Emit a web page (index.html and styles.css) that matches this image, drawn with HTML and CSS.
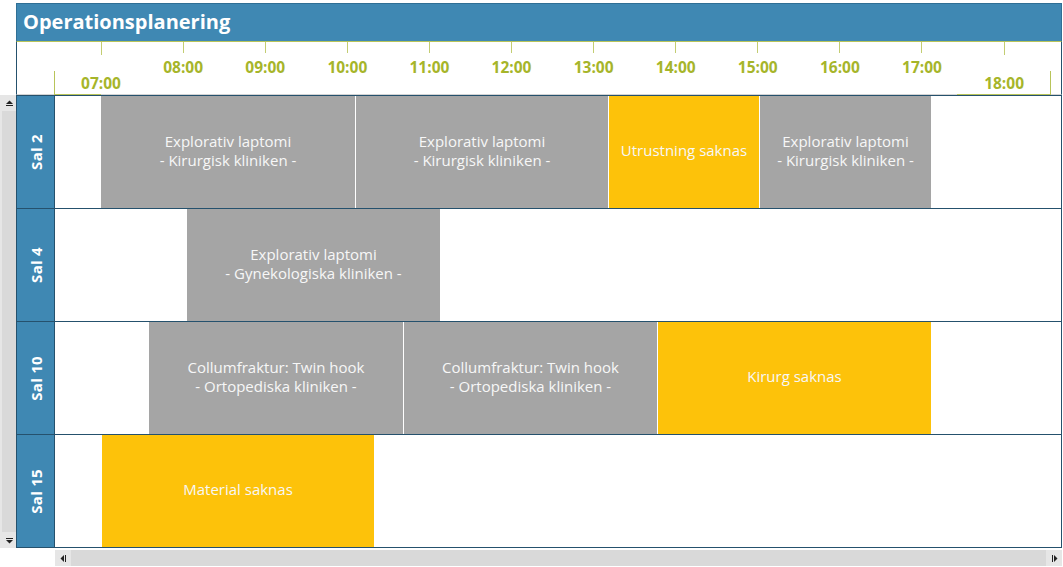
FILE: index.html
```html
<!DOCTYPE html>
<html lang="sv">
<head>
<meta charset="utf-8">
<title>Operationsplanering</title>
<link rel="stylesheet" href="styles.css">
</head>
<body>
<div class="planner">
  <div class="titlebar">Operationsplanering</div>

  <div class="axis">
    <div class="hours">
      <div class="hour edge"><span class="tick"></span><span class="label">07:00</span></div>
      <div class="hour"><span class="tick"></span><span class="label">08:00</span></div>
      <div class="hour"><span class="tick"></span><span class="label">09:00</span></div>
      <div class="hour"><span class="tick"></span><span class="label">10:00</span></div>
      <div class="hour"><span class="tick"></span><span class="label">11:00</span></div>
      <div class="hour"><span class="tick"></span><span class="label">12:00</span></div>
      <div class="hour"><span class="tick"></span><span class="label">13:00</span></div>
      <div class="hour"><span class="tick"></span><span class="label">14:00</span></div>
      <div class="hour"><span class="tick"></span><span class="label">15:00</span></div>
      <div class="hour"><span class="tick"></span><span class="label">16:00</span></div>
      <div class="hour"><span class="tick"></span><span class="label">17:00</span></div>
      <div class="hour edge"><span class="tick"></span><span class="label">18:00</span></div>
    </div>
    <span class="bracket bracket-left"></span>
    <span class="bracket bracket-right"></span>
  </div>

  <div class="body">
    <div class="vscroll">
      <div class="sbtn">
        <svg width="9" height="7" viewBox="0 0 9 7"><path d="M1 4 L4.5 0.5 L8 4 Z" fill="#222"/><rect x="1" y="5" width="7" height="1" fill="#222"/></svg>
      </div>
      <div class="strack"></div>
      <div class="sbtn">
        <svg width="9" height="7" viewBox="0 0 9 7"><rect x="1" y="1" width="7" height="1" fill="#222"/><path d="M1 3 L4.5 6.5 L8 3 Z" fill="#222"/></svg>
      </div>
    </div>

    <div class="grid">
      <div class="row">
        <div class="room"><span>Sal 2</span></div>
        <div class="lane">
          <div class="event gray" style="left:46px;width:254px">Explorativ laptomi<br>- Kirurgisk kliniken -</div>
          <div class="event gray" style="left:301px;width:252px">Explorativ laptomi<br>- Kirurgisk kliniken -</div>
          <div class="event yellow" style="left:554px;width:150px">Utrustning saknas</div>
          <div class="event gray" style="left:705px;width:171px">Explorativ laptomi<br>- Kirurgisk kliniken -</div>
        </div>
      </div>
      <div class="row">
        <div class="room"><span>Sal 4</span></div>
        <div class="lane">
          <div class="event gray" style="left:132px;width:253px">Explorativ laptomi<br>- Gynekologiska kliniken -</div>
        </div>
      </div>
      <div class="row">
        <div class="room"><span>Sal 10</span></div>
        <div class="lane">
          <div class="event gray" style="left:94px;width:254px">Collumfraktur: Twin hook<br>- Ortopediska kliniken -</div>
          <div class="event gray" style="left:349px;width:253px">Collumfraktur: Twin hook<br>- Ortopediska kliniken -</div>
          <div class="event yellow" style="left:603px;width:273px">Kirurg saknas</div>
        </div>
      </div>
      <div class="row">
        <div class="room"><span>Sal 15</span></div>
        <div class="lane">
          <div class="event yellow" style="left:47px;width:272px">Material saknas</div>
        </div>
      </div>
    </div>
  </div>

  <div class="hscroll">
    <div class="sbtn h">
      <svg width="7" height="9" viewBox="0 0 7 9"><path d="M4 1 L0.5 4.5 L4 8 Z" fill="#222"/><rect x="5" y="1" width="1" height="7" fill="#222"/></svg>
    </div>
    <div class="strack"></div>
    <div class="sbtn h">
      <svg width="7" height="9" viewBox="0 0 7 9"><rect x="1" y="1" width="1" height="7" fill="#222"/><path d="M3 1 L6.5 4.5 L3 8 Z" fill="#222"/></svg>
    </div>
  </div>
</div>
</body>
</html>
```

FILE: styles.css
```css
* { box-sizing: border-box; }

body {
  margin: 0;
  background: #ffffff;
  font-family: "Open Sans", "Noto Sans", "DejaVu Sans", sans-serif;
}

.planner {
  width: 1063px;
  padding-top: 3px;
}

.titlebar {
  margin-left: 16px;
  width: 1046px;
  height: 38px;
  background: #3f88b3;
  border: 1px solid #2f6f95;
  border-bottom: none;
  color: #ffffff;
  font-weight: 700;
  font-size: 20px;
  line-height: 35px;
  padding-left: 6px;
}

.axis {
  position: relative;
  margin-left: 16px;
  width: 1046px;
  height: 54px;
  border-top: 1px solid #b8c45a;
  border-left: 1px solid #25516d;
  border-right: 1px solid #25516d;
  border-bottom: 1px solid #d4d4d4;
}

.hours {
  display: flex;
  padding-left: 43px;
}

.hour {
  width: 82.1px;
  flex: none;
  display: flex;
  flex-direction: column;
  align-items: center;
}

.tick {
  width: 1px;
  height: 11px;
  background: #c3cd72;
}

.label {
  margin-top: 4px;
  color: #a6b52a;
  font-weight: 700;
  font-size: 15.5px;
  line-height: 20px;
}

.hour.edge .tick { height: 13px; }
.hour.edge .label { margin-top: 18px; }

.bracket {
  position: absolute;
  bottom: -1px;
  height: 24px;
  border-bottom: 1px solid #b8c45a;
}

.bracket-left {
  left: 37px;
  width: 47px;
  border-left: 1px solid #b8c45a;
}

.bracket-right {
  left: 940px;
  width: 94px;
  border-right: 1px solid #b8c45a;
}

.body {
  display: flex;
}

.vscroll {
  width: 16px;
  height: 453px;
  display: flex;
  flex-direction: column;
  background: #d9d9d9;
  border-left: 2px solid #e6e6e6;
}

.sbtn {
  width: 14px;
  height: 16px;
  flex: none;
  display: flex;
  align-items: center;
  justify-content: center;
  background: #e6e6e6;
}

.strack {
  flex: 1;
  background: #d9d9d9;
}

.grid {
  width: 1046px;
  border-top: 1px solid #25516d;
  border-left: 1px solid #25516d;
  border-right: 1px solid #25516d;
}

.row {
  display: flex;
  height: 113px;
  border-bottom: 1px solid #25516d;
}

.room {
  width: 38px;
  flex: none;
  background: #3f88b3;
  border-right: 1px solid #25516d;
  display: flex;
  align-items: center;
  justify-content: center;
}

.room span {
  writing-mode: vertical-rl;
  transform: rotate(180deg);
  color: #ffffff;
  font-weight: 700;
  font-size: 15px;
  letter-spacing: 0.3px;
  white-space: nowrap;
}

.lane {
  position: relative;
  flex: 1;
}

.event {
  position: absolute;
  top: 0;
  bottom: 0;
  display: flex;
  align-items: center;
  justify-content: center;
  text-align: center;
  color: #f7f7f7;
  font-size: 15px;
  line-height: 19px;
  padding-bottom: 3px;
}

.event.gray { background: #a5a5a5; }
.event.yellow { background: #fdc20a; }

.hscroll {
  display: flex;
  margin-left: 55px;
  margin-top: 2px;
  width: 1007px;
  height: 16px;
  background: #d9d9d9;
}

.sbtn.h {
  width: 16px;
  height: 16px;
  background: #e6e6e6;
}
```
